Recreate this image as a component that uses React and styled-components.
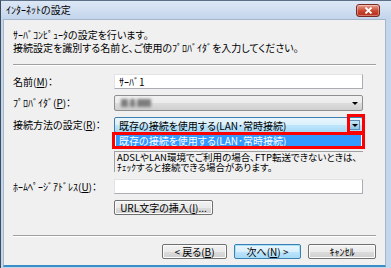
import React from 'react';
import styled, { createGlobalStyle } from 'styled-components';

const Global = createGlobalStyle`
  html, body { margin: 0; padding: 0; background: #c9daee; }
  body {
    font-family: "Noto Sans CJK JP", "Noto Sans", sans-serif;
    font-size: 10px;
    color: #000;
    font-feature-settings: "palt";
  }
  * { box-sizing: border-box; }
`;

const Window = styled.div`
  width: 391px;
  height: 268px;
  display: flex;
  flex-direction: column;
  background: #c4d6ec;
  border-left: 1px solid #3d4b5c;
  border-top: 1px solid #5c6f86;
  overflow: hidden;
`;

const TitleBar = styled.div`
  height: 18px;
  flex: none;
  display: flex;
  align-items: center;
  justify-content: space-between;
  padding: 0 11px 0 5px;
  background: linear-gradient(#dde8f5, #c3d5ec);
  font-size: 10px;
  line-height: 1;
`;

const CloseBtn = styled.div`
  width: 24px;
  height: 13px;
  border: 1px solid #7a2a22;
  border-radius: 3px;
  background: linear-gradient(#e9a494, #c7452f 55%, #b2301c);
  box-shadow: inset 0 0 0 1px rgba(255, 255, 255, 0.35);
  display: flex;
  align-items: center;
  justify-content: center;
`;

const Client = styled.div`
  flex: 1;
  margin: 0 5px 1px 2px;
  background-color: #f0f0f0;
  background-image: radial-gradient(#e6e6e6 0.6px, transparent 0.7px);
  background-size: 2px 2px;
  border: 1px solid #a7b6c8;
  border-bottom: 2px solid #3a8fc7;
  padding: 8px 9px 0 9px;
  display: flex;
  flex-direction: column;
`;

const Intro = styled.p`
  margin: 0;
  line-height: 13px;
`;

const Etched = styled.div`
  height: 2px;
  flex: none;
  border-top: 1px solid #a0a0a0;
  border-bottom: 1px solid #ffffff;
  margin: ${(p) => p.$m};
`;

const Form = styled.div`
  display: grid;
  grid-template-columns: 101px 249px;
  align-items: center;
  row-gap: 6px;
`;

const Label = styled.div`
  line-height: 12px;
  white-space: nowrap;
`;

const TextBox = styled.div`
  height: 15px;
  background: #fff;
  border: 1px solid #abadb3;
  border-top-color: #e3e3e3;
  border-left-color: #e2e3ea;
  padding: 0 4px;
  line-height: 13px;
`;

const Combo = styled.div`
  position: relative;
  height: 16px;
  border: 1px solid ${(p) => (p.$focus ? '#3c7fb1' : '#8e8f8f')};
  border-radius: 2px;
  background: ${(p) =>
    p.$focus
      ? 'linear-gradient(#eaf6fd, #d9f0fc 50%, #bee6fd 51%, #a7d9f5)'
      : 'linear-gradient(#f2f2f2, #ebebeb 50%, #dddddd 51%, #cfcfcf)'};
  display: flex;
  align-items: center;
  padding-left: 4px;
  line-height: 13px;
  white-space: nowrap;
`;

const Arrow = styled.div`
  position: absolute;
  right: 3px;
  top: 2px;
  bottom: 2px;
  width: 9px;
  display: flex;
  align-items: center;
  justify-content: center;
  ${(p) => p.$boxed && 'background: linear-gradient(#c6e4f6, #8fc4e6); border: 1px solid #5f8eb3; right: 2px; width: 11px;'}
  &::after {
    content: '';
    border-left: 3px solid transparent;
    border-right: 3px solid transparent;
    border-top: 3px solid #000;
  }
`;

const Blur = styled.div`
  display: flex;
  gap: 2px;
  margin-left: 2px;
  filter: blur(1.4px);
  span {
    display: block;
    height: 8px;
    background: #7d7d7d;
  }
`;

const DropList = styled.div`
  position: absolute;
  left: -1px;
  right: -1px;
  top: 15px;
  height: 16px;
  background: #fff;
  border: 1px solid #646464;
  padding: 1px;
  z-index: 2;
`;

const Selected = styled.div`
  height: 100%;
  background: #3399ff;
  color: #fff;
  padding-left: 3px;
  line-height: 12px;
`;

const Mark = styled.div`
  position: absolute;
  border: 3px solid #ff0000;
  z-index: 3;
`;

const Note = styled.div`
  grid-column: 2;
  height: 21px;
  margin: 12px 0 1px;
  border-left: 1px solid #a0a0a0;
  border-top: 1px solid #a0a0a0;
  padding: 0 0 0 2px;
  font-size: 9.5px;
  line-height: 10px;
  white-space: nowrap;
  p {
    margin: 0;
    height: 10px;
  }
`;

const Button = styled.button`
  font-family: inherit;
  font-size: 10px;
  font-feature-settings: "palt";
  color: #000;
  height: 15px;
  width: ${(p) => p.$w || 'auto'};
  padding: 0 4px;
  border: 1px solid ${(p) => (p.$def ? '#3c7fb1' : '#707070')};
  border-radius: 2px;
  background: ${(p) =>
    p.$def
      ? 'linear-gradient(#eaf6fd, #d9f0fc 50%, #bee6fd 51%, #a7d9f5)'
      : 'linear-gradient(#f2f2f2, #ebebeb 50%, #dddddd 51%, #cfcfcf)'};
  box-shadow: inset 0 0 0 1px ${(p) => (p.$def ? '#a8e0f8' : '#fcfcfc')};
  line-height: 12px;
  display: flex;
  align-items: center;
  justify-content: center;
  white-space: nowrap;
`;

const ButtonRow = styled.div`
  display: flex;
  justify-content: flex-end;
  gap: 7px;
`;

export default function App() {
  return (
    <>
      <Global />
      <Window>
        <TitleBar>
          <span>ｲﾝﾀｰﾈｯﾄの設定</span>
          <CloseBtn>
            <svg width="9" height="7" viewBox="0 0 9 7">
              <path d="M1.5 0.5 L7.5 6.5 M7.5 0.5 L1.5 6.5" stroke="#fff" strokeWidth="1.8" />
            </svg>
          </CloseBtn>
        </TitleBar>
        <Client>
          <Intro>ｻｰﾊﾞｺﾝﾋﾟｭｰﾀの設定を行います。</Intro>
          <Intro>接続設定を識別する名前と、ご使用のﾌﾟﾛﾊﾞｲﾀﾞを入力してください。</Intro>
          <Etched $m="10px 0 8px" />
          <Form>
            <Label>名前(<u>M</u>)：</Label>
            <TextBox>ｻｰﾊﾞ1</TextBox>
            <Label>ﾌﾟﾛﾊﾞｲﾀﾞ(<u>P</u>)：</Label>
            <Combo>
              <Blur>
                <span style={{ width: 7 }} />
                <span style={{ width: 5 }} />
                <span style={{ width: 14 }} />
              </Blur>
              <Arrow />
            </Combo>
            <Label>接続方法の設定(<u>R</u>)：</Label>
            <Combo $focus>
              既存の接続を使用する(LAN･常時接続)
              <Arrow $boxed />
              <DropList>
                <Selected>既存の接続を使用する(LAN･常時接続)</Selected>
              </DropList>
              <Mark style={{ right: -3, top: -4, width: 18, height: 20 }} />
              <Mark style={{ left: -3, right: -3, top: 14, height: 17 }} />
            </Combo>
            <Note>
              <p>ADSLやLAN環境でご利用の場合、FTP転送できないときは、</p>
              <p>ﾁｪｯｸすると接続できる場合があります。</p>
            </Note>
            <Label>ﾎｰﾑﾍﾟｰｼﾞｱﾄﾞﾚｽ(<u>U</u>)：</Label>
            <TextBox />
            <div />
            <div>
              <Button $w="99px">URL文字の挿入(<u>I</u>)...</Button>
            </div>
          </Form>
          <Etched $m="20px 0 7px" />
          <ButtonRow>
            <Button $w="65px">&lt; 戻る(<u>B</u>)</Button>
            <Button $w="67px" $def>次へ(<u>N</u>) &gt;</Button>
            <Button $w="68px">ｷｬﾝｾﾙ</Button>
          </ButtonRow>
        </Client>
      </Window>
    </>
  );
}
